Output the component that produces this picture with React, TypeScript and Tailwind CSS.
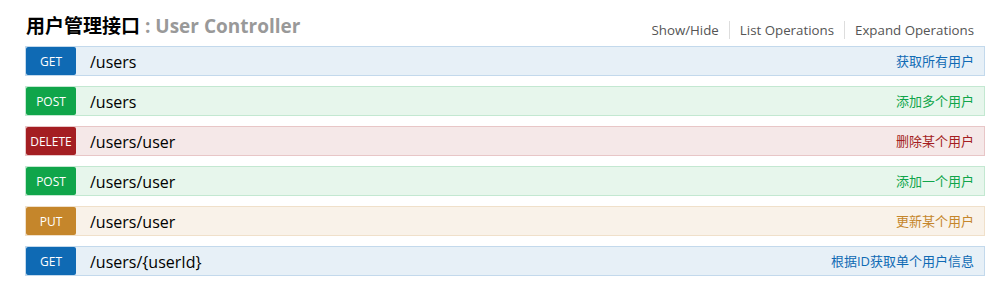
import React from "react";

type Op = { method: string; path: string; desc: string };

const ops: Op[] = [
  { method: "GET", path: "/users", desc: "获取所有用户" },
  { method: "POST", path: "/users", desc: "添加多个用户" },
  { method: "DELETE", path: "/users/user", desc: "删除某个用户" },
  { method: "POST", path: "/users/user", desc: "添加一个用户" },
  { method: "PUT", path: "/users/user", desc: "更新某个用户" },
  { method: "GET", path: "/users/{userId}", desc: "根据ID获取单个用户信息" },
];

const styles: Record<string, { row: string; badge: string; desc: string }> = {
  GET: { row: "bg-[#e7f0f7] border-[#c3d9ec]", badge: "bg-[#0f6ab4]", desc: "text-[#0f6ab4]" },
  POST: { row: "bg-[#e7f6ec] border-[#c3e8d1]", badge: "bg-[#10a54a]", desc: "text-[#10a54a]" },
  DELETE: { row: "bg-[#f5e8e8] border-[#e8c6c7]", badge: "bg-[#a41e22]", desc: "text-[#a41e22]" },
  PUT: { row: "bg-[#f9f2e9] border-[#f0e0ca]", badge: "bg-[#c5862b]", desc: "text-[#c5862b]" },
};

export default function App() {
  return (
    <div
      className="w-[999px] h-[286px] bg-white pl-[25px] pr-[14px]"
      style={{ fontFamily: '"Open Sans", "Noto Sans", "Noto Sans CJK SC", sans-serif' }}
    >
      <div className="flex items-end justify-between h-[46px] pb-[7px]">
        <div className="text-[19px] font-bold leading-[24px] pl-[1px] mb-[1px]">
          <span className="text-black">用户管理接口</span>
          <span className="text-[#999]"> : User Controller</span>
        </div>
        <div className="flex items-center text-[13.3px] text-[#555] leading-[18px] pr-[11px]">
          <span className="pr-[10px]">Show/Hide</span>
          <span className="border-l border-[#ddd] px-[10px]">List Operations</span>
          <span className="border-l border-[#ddd] pl-[10px]">Expand Operations</span>
        </div>
      </div>
      <div className="flex flex-col gap-[10px]">
        {ops.map((op, i) => {
          const s = styles[op.method];
          return (
            <div key={i} className={`flex items-center h-[30px] border ${s.row}`}>
              <div
                className={`w-[50px] h-[28px] rounded-[2px] flex items-center justify-center text-white text-[12px] pt-[1px] ${s.badge}`}
              >
                {op.method}
              </div>
              <div className="pl-[14px] text-[16px] text-black flex-1 pt-[1px]">{op.path}</div>
              <div className={`pr-[10px] text-[13px] pt-[1px] ${s.desc}`}>{op.desc}</div>
            </div>
          );
        })}
      </div>
    </div>
  );
}
